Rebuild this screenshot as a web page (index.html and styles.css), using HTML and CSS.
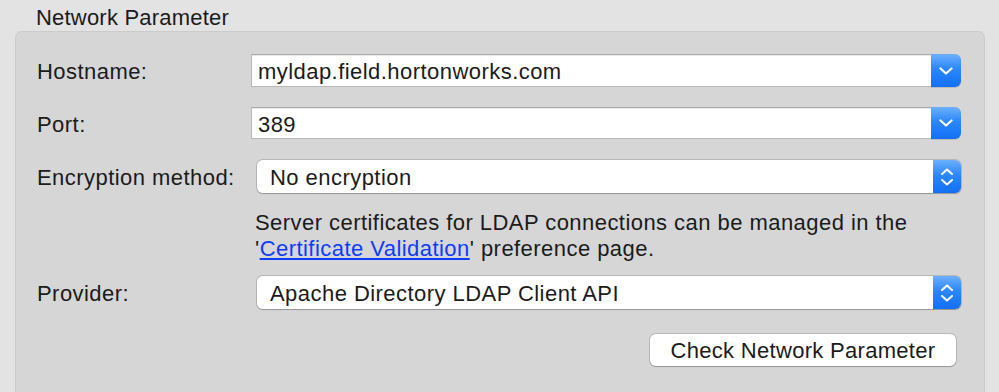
FILE: index.html
```html
<!DOCTYPE html>
<html>
<head>
<meta charset="utf-8">
<link rel="stylesheet" href="styles.css">
</head>
<body>
<div class="page">
  <div class="group-title">Network Parameter</div>
  <div class="group">
    <div class="row row-1">
      <div class="label">Hostname:</div>
      <div class="combo">
        <div class="combo-field">myldap.field.hortonworks.com</div>
        <div class="combo-btn">
          <svg width="14" height="8" viewBox="0 0 14 8"><path d="M1.5 1.5 L7 6.5 L12.5 1.5" fill="none" stroke="#fff" stroke-width="2.2" stroke-linecap="round" stroke-linejoin="round"/></svg>
        </div>
      </div>
    </div>
    <div class="row row-2">
      <div class="label">Port:</div>
      <div class="combo">
        <div class="combo-field">389</div>
        <div class="combo-btn">
          <svg width="14" height="8" viewBox="0 0 14 8"><path d="M1.5 1.5 L7 6.5 L12.5 1.5" fill="none" stroke="#fff" stroke-width="2.2" stroke-linecap="round" stroke-linejoin="round"/></svg>
        </div>
      </div>
    </div>
    <div class="row row-3">
      <div class="label">Encryption method:</div>
      <div class="popup">
        <div class="popup-text">No encryption</div>
        <div class="popup-btn">
          <svg width="14" height="22" viewBox="0 0 14 22"><path d="M2 8 L7 3.5 L12 8" fill="none" stroke="#fff" stroke-width="2" stroke-linecap="round" stroke-linejoin="round"/><path d="M2 14 L7 18.5 L12 14" fill="none" stroke="#fff" stroke-width="2" stroke-linecap="round" stroke-linejoin="round"/></svg>
        </div>
      </div>
    </div>
    <div class="help">Server certificates for LDAP connections can be managed in the<br>'<a class="link" href="#">Certificate Validation</a>' preference page.</div>
    <div class="row row-4">
      <div class="label">Provider:</div>
      <div class="popup">
        <div class="popup-text">Apache Directory LDAP Client API</div>
        <div class="popup-btn">
          <svg width="14" height="22" viewBox="0 0 14 22"><path d="M2 8 L7 3.5 L12 8" fill="none" stroke="#fff" stroke-width="2" stroke-linecap="round" stroke-linejoin="round"/><path d="M2 14 L7 18.5 L12 14" fill="none" stroke="#fff" stroke-width="2" stroke-linecap="round" stroke-linejoin="round"/></svg>
        </div>
      </div>
    </div>
    <div class="actions">
      <button class="push">Check Network Parameter</button>
    </div>
  </div>
</div>
</body>
</html>
```
FILE: styles.css
```css
html, body {
  margin: 0;
  padding: 0;
  background: #e3e3e3;
  overflow: hidden;
}
body {
  width: 999px;
  height: 392px;
  font-family: "Liberation Sans", Arial, sans-serif;
  font-size: 22px;
  letter-spacing: 0.45px;
  color: #1b1b1b;
}
.page {
  padding-top: 4px;
}
.group-title {
  padding-left: 36px;
  height: 27px;
  line-height: 27px;
  letter-spacing: 0.2px;
}
.group {
  margin-left: 15px;
  width: 968px;
  height: 338px;
  box-sizing: content-box;
  background: #d6d6d6;
  border: 1px solid #cbcbcb;
  border-bottom: none;
  border-radius: 7px 7px 0 0;
  padding: 22px 0 0 0;
}
.row {
  display: grid;
  grid-template-columns: 214px 710px;
  margin-left: 21px;
  align-items: center;
}
.row-1 { height: 33px; }
.row-2 { height: 32px; margin-top: 20px; }
.row-3 { height: 33px; margin-top: 21px; }
.row-4 { height: 33px; margin-top: 16px; }
.label {
  white-space: nowrap;
  padding-top: 3px;
}
.combo {
  display: flex;
  height: 100%;
}
.combo-field {
  flex: 1;
  background: #fff;
  border: 1px solid #b9b9b9;
  border-top-color: #a9a9a9;
  border-right: none;
  padding-left: 6px;
  padding-top: 3px;
  display: flex;
  align-items: center;
  box-shadow: inset 0 1px 0 #e9e9e9;
}
.combo-btn {
  width: 30px;
  background: linear-gradient(#6cb0fd, #2c87fa 45%, #1170f6);
  border-radius: 0 6px 6px 0;
  display: flex;
  align-items: center;
  justify-content: center;
  box-shadow: 0 1px 0 rgba(0,0,0,0.12);
}
.popup {
  display: flex;
  height: 100%;
  margin-left: 6px;
  border-radius: 6px;
  box-shadow: 0 0 0 1px rgba(0,0,0,0.14), 0 1px 1px rgba(0,0,0,0.18);
}
.popup-text {
  flex: 1;
  background: #fff;
  border-radius: 6px 0 0 6px;
  padding-left: 13px;
  padding-top: 2px;
  display: flex;
  align-items: center;
}
.popup-btn {
  width: 28px;
  background: linear-gradient(#6cb0fd, #2c87fa 45%, #1170f6);
  border-radius: 0 6px 6px 0;
  display: flex;
  align-items: center;
  justify-content: center;
}
.help {
  margin-left: 239px;
  margin-top: 17px;
  line-height: 26px;
  height: 50px;
}
.link {
  color: #0d3bff;
  text-decoration: underline;
}
.actions {
  display: flex;
  justify-content: flex-end;
  width: 940px;
  margin-top: 25px;
}
.push {
  font-family: inherit;
  font-size: 22px;
  letter-spacing: 0.3px;
  color: #1b1b1b;
  width: 306px;
  height: 32px;
  background: #fff;
  border: none;
  border-radius: 6px;
  box-shadow: 0 0 0 1px rgba(0,0,0,0.13), 0 1px 1px rgba(0,0,0,0.2);
  padding: 2px 0 0 0;
}
```
